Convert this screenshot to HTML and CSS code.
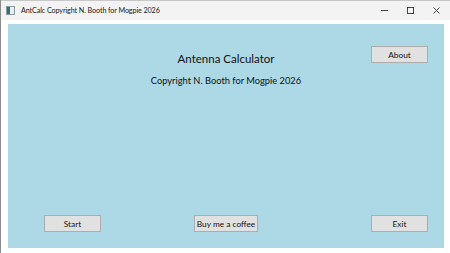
FILE: index.html
```html
<!DOCTYPE html>
<html lang="en">
<head>
  <meta charset="UTF-8">
  <meta name="viewport" content="width=device-width, initial-scale=1.0">
  <title>AntCalc</title>
  <link rel="stylesheet" href="styles.css">
</head>
<body>
  <div class="window">
    <div class="titlebar">
      <svg class="app-icon" width="9" height="9" viewBox="0 0 9 9">
        <rect x="0.5" y="0.5" width="8" height="8" fill="#e8eef0" stroke="#8a9aa0"/>
        <rect x="1" y="1" width="3" height="7" fill="#2f6f78"/>
      </svg>
      <span class="caption">AntCalc Copyright N. Booth for Mogpie 2026</span>
      <span class="controls">
        <svg width="7" height="7" viewBox="0 0 7 7"><path d="M0 3.5h7" stroke="#444" stroke-width="1"/></svg>
        <svg width="7" height="7" viewBox="0 0 7 7"><rect x="0.5" y="0.5" width="6" height="6" fill="none" stroke="#444" stroke-width="1"/></svg>
        <svg width="7" height="7" viewBox="0 0 7 7"><path d="M0.5 0.5l6 6M6.5 0.5l-6 6" stroke="#444" stroke-width="1"/></svg>
      </span>
    </div>

    <div class="client">
      <div class="panel">
        <div class="header">
          <h1 class="heading">Antenna Calculator</h1>
          <button class="btn about">About</button>
          <p class="copyright">Copyright N. Booth for Mogpie 2026</p>
        </div>

        <div class="footer">
          <button class="btn start">Start</button>
          <button class="btn coffee">Buy me a coffee</button>
          <button class="btn exit">Exit</button>
        </div>
      </div>
    </div>
  </div>
</body>
</html>
```

FILE: styles.css
```css
html, body {
  margin: 0;
  padding: 0;
  background-color: #fff;
  font-family: Lato, 'Open Sans', sans-serif;
}

.window {
  display: flex;
  flex-direction: column;
  width: 450px;
  height: 253px;
  box-sizing: border-box;
  border-left: 1px solid #8c8c8c;
}

.titlebar {
  display: flex;
  align-items: center;
  height: 20px;
  background-color: #f3f3f3;
  border-top: 1px solid #c8c8c8;
  box-sizing: border-box;
  padding-left: 5px;
}

.app-icon {
  margin-right: 6px;
}

.caption {
  font-size: 7.2px;
  letter-spacing: -0.1px;
  color: #1a1a1a;
}

.controls {
  margin-left: auto;
  display: flex;
  gap: 19px;
  padding-right: 10px;
}

.client {
  flex: 1;
  display: flex;
  padding: 4px 6px 5px 7px;
}

.panel {
  flex: 1;
  display: flex;
  flex-direction: column;
  justify-content: space-between;
  background-color: #add8e6;
}

.header {
  display: grid;
  grid-template-columns: 1fr auto 1fr;
  padding-top: 22px;
}

.heading {
  grid-column: 2;
  grid-row: 1;
  margin: 4px 0 0;
  font-size: 11.5px;
  font-weight: normal;
  line-height: 18px;
  color: #111;
}

.about {
  grid-column: 3;
  grid-row: 1;
  justify-self: end;
  align-self: start;
  margin-right: 16px;
}

.copyright {
  grid-column: 1 / -1;
  grid-row: 2;
  margin: 5px 0 0;
  text-align: center;
  font-size: 9.3px;
  line-height: 15px;
  color: #111;
}

.footer {
  display: grid;
  grid-template-columns: 1fr auto 1fr;
  align-items: center;
  padding-bottom: 16px;
}

.btn {
  height: 17px;
  width: 57px;
  padding: 0;
  font-family: inherit;
  font-size: 8.3px;
  white-space: nowrap;
  color: #111;
  background-color: #e1e1e1;
  border: 1px solid #adadad;
  border-radius: 0;
}

.start {
  justify-self: start;
  margin-left: 36px;
}

.coffee {
  width: 64px;
}

.exit {
  justify-self: end;
  margin-right: 16px;
}
```
